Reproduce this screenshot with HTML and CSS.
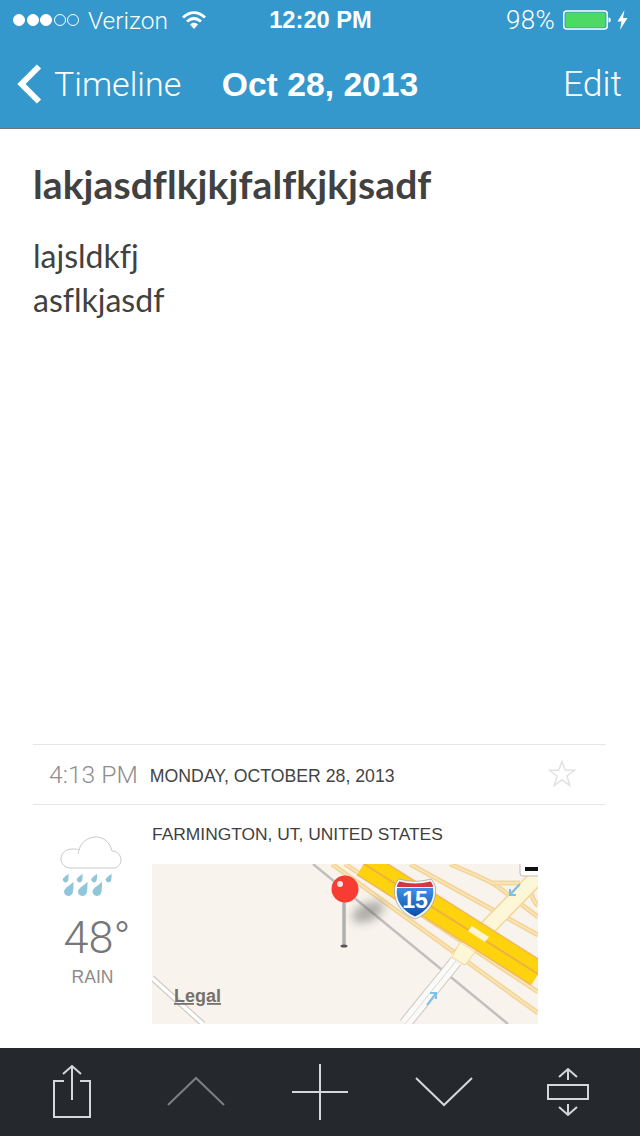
FILE: index.html
```html
<!DOCTYPE html>
<html lang="en">
<head>
<meta charset="utf-8">
<title>Oct 28, 2013</title>
<link rel="stylesheet" href="styles.css">
</head>
<body>
<div class="app">
  <header class="header">
    <div class="status">
      <div class="status-left">
        <div class="signal"><i class="dot on"></i><i class="dot on"></i><i class="dot on"></i><i class="dot"></i><i class="dot"></i></div>
        <span class="carrier">Verizon</span>
        <svg class="wifi" width="26" height="20" viewBox="0 0 26 20"><path class="wifi-arc" d="M2 7.500C9 1 17 1 24 7.500"/><path class="wifi-arc" d="M6 11.500C10.500 7.500 15.500 7.500 20 11.500"/><path class="wifi-fill" d="M9 14.500C11.500 12.300 14.500 12.300 17 14.500L13 19Z"/></svg>
      </div>
      <div class="time">12:20 PM</div>
      <div class="status-right">
        <span class="pct">98%</span>
        <svg class="battery" width="48" height="20" viewBox="0 0 48 20"><rect class="bat-shell" x="0.750" y="1" width="43.500" height="18" rx="3"/><rect class="bat-fill" x="2.500" y="2.500" width="40" height="15" rx="1.500"/><path class="bat-tip" d="M45.500 7.500C47 7.500 47.800 8.500 47.800 10C47.800 11.500 47 12.500 45.500 12.500Z"/></svg>
        <svg class="bolt" width="11" height="20" viewBox="0 0 11 20"><path class="bat-tip" d="M7.500 0L0.500 11.500H4.500L3 20L10.500 8H6Z"/></svg>
      </div>
    </div>
    <nav class="nav">
      <div class="nav-back">
        <svg class="chev" width="26" height="40" viewBox="0 0 26 40"><path class="chev-line" d="M23 2.500L5.500 20L23 37.500"/></svg>
        <span>Timeline</span>
      </div>
      <div class="nav-title">Oct 28, 2013</div>
      <div class="nav-edit">Edit</div>
    </nav>
  </header>

  <main class="note">
    <h1 class="note-title">lakjasdflkjkjfalfkjkjsadf</h1>
    <p class="note-text">lajsldkfj<br>asflkjasdf</p>
  </main>

  <section class="meta">
    <div class="meta-row">
      <span class="meta-time">4:13 PM</span>
      <span class="meta-date">MONDAY, OCTOBER 28, 2013</span>
      <svg class="star" width="30" height="30" viewBox="0 0 30 30"><path class="star-line" d="M15 1.500L18.300 10.300H27.500L20 16L22.700 25.500L15 19.800L7.300 25.500L10 16L2.500 10.300H11.700Z"/></svg>
    </div>
    <div class="detail">
      <div class="weather">
        <svg class="weather-icon" width="64" height="62" viewBox="0 0 64 62">
          <defs><path id="drop" d="M5 -9C3 -6 -4 -3 -4.500 1A4.500 4.500 0 0 0 4 3C5 0 5 -5 5 -9Z"/></defs>
          <path class="cloud" d="M11 32H53C58 32 61 28 61 24C61 19 57 15 52 15C50 6 43 1 36 1C28 1 21 6 19 14C17 13 15 13 12 13C6 13 1 17 1 23C1 28 5 32 11 32Z"/>
          <path class="cloud" d="M19 14C18.500 15 18.300 16 18.300 18"/>
          <g class="rain">
            <use href="#drop" transform="translate(5.500 43) scale(.62)"/>
            <use href="#drop" transform="translate(19.500 43) scale(.62)"/>
            <use href="#drop" transform="translate(34 43) scale(.62)"/>
            <use href="#drop" transform="translate(48.500 43) scale(.62)"/>
            <use href="#drop" transform="translate(8.500 54.500)"/>
            <use href="#drop" transform="translate(22.500 54.500)"/>
            <use href="#drop" transform="translate(37 54.500)"/>
          </g>
        </svg>
        <div class="temp">48°</div>
        <div class="cond">RAIN</div>
      </div>
      <div class="place">
        <div class="place-name">FARMINGTON, UT, UNITED STATES</div>
        <svg class="map" width="386" height="160" viewBox="0 0 386 160">
          <defs>
            <linearGradient id="shieldBlue" x1="0" y1="0" x2="0" y2="1"><stop offset="0" stop-color="#3f8fe6"/><stop offset="1" stop-color="#0e4fa8"/></linearGradient>
            <filter id="soft" x="-50%" y="-50%" width="200%" height="200%"><feGaussianBlur stdDeviation="5"/></filter>
            <linearGradient id="stem" x1="0" y1="0" x2="1" y2="0"><stop offset="0" stop-color="#8d8d8d"/><stop offset=".5" stop-color="#c4c4c4"/><stop offset="1" stop-color="#8a8a8a"/></linearGradient>
          </defs>
          <rect class="land" width="386" height="160"/>
          <path class="gray-road" d="M161 0L356 160"/>
          <path class="wl-edge" d="M0 114L51 160"/>
          <path class="wl-core" d="M0 114L51 160"/>

          <path class="side-edge" d="M180 0L386 149"/>
          <path class="side-core" d="M180 0L386 149"/>
          <path class="side-edge" d="M193 0L386 128"/>
          <path class="side-core" d="M193 0L386 128"/>
          <path class="side-edge" d="M258 0L386 71"/>
          <path class="side-core" d="M258 0L386 71"/>
          <path class="side-edge" d="M298 0C318 9 332 14 345 22L386 53"/>
          <path class="side-core" d="M298 0C318 9 332 14 345 22L386 53"/>
          <path class="side-edge" d="M341 19H368"/>
          <path class="side-core" d="M341 19H368"/>
          <path class="side-edge" d="M386 42C377 32 378 24 386 16"/>
          <path class="side-core" d="M386 42C377 32 378 24 386 16"/>

          <path class="ramp-edge" d="M386 12L305 95"/>
          <path class="ramp-core" d="M386 12L305 95"/>
          <path class="wh-edge" d="M304 97L253 160"/>
          <path class="wh-core" d="M304 97L253 160"/>
          <path class="wh-mid" d="M304 97L253 160"/>
          <path class="square-pad" d="M308 78L323 88L313 101L300 93Z"/>

          <path class="hw-edge" d="M212 0L386 110"/>
          <path class="hw" d="M212 0L386 110"/>
          <path class="hw-mid" d="M212 0L386 110"/>
          <path class="bridge" d="M320 62L337 73L333 78L316 67Z"/>
          <path class="arrow" d="M368 20L358 31M358 25V31H364"/>
          <path class="arrow" d="M275 141L284 129M278 129H284V135"/>

          <rect class="sign" x="368" y="-10" width="24" height="22" rx="3"/>
          <path class="sign-ink" d="M373 3H386V7H373Z"/>

          <ellipse class="pin-shadow" cx="216" cy="48" rx="17" ry="9" transform="rotate(-25 216 48)"/>
          <rect class="pin-stem" x="190.500" y="36" width="3" height="46" fill="url(#stem)"/>
          <ellipse class="pin-base" cx="192" cy="82" rx="3.500" ry="1.500"/>
          <circle class="pin-head" cx="193" cy="25" r="13.500"/>
          <circle class="pin-shine" cx="188" cy="20" r="3"/>

          <path class="shield-rim" d="M247 15C258 18 268 18 279 15C281 17 283 20 283.500 24C285 38 276 50 263 55C250 50 241 38 242.500 24C243 20 245 17 247 15Z"/>
          <path class="shield-blue" d="M245 24H281C283 37 275 47 263 52.500C251 47 243 37 245 24Z" fill="url(#shieldBlue)"/>
          <path class="shield-red" d="M247.500 17.500C258 20 268 20 278.500 17.500C280 19 281 21 281 23H245C245 21 246 19 247.500 17.500Z"/>
          <text class="shield-num" x="263" y="44">15</text>
          <text class="legal" x="22" y="138">Legal</text>
        </svg>
      </div>
    </div>
  </section>

  <footer class="toolbar">
    <div class="tool">
      <svg width="64" height="64" viewBox="0 0 64 64"><path class="tool-line" d="M24 21H14V57H50V21H40M32 40V6M23 14L32 6L41 14"/></svg>
    </div>
    <div class="tool">
      <svg width="64" height="64" viewBox="0 0 64 64"><path class="tool-line dim" d="M4 45L32 18L60 45"/></svg>
    </div>
    <div class="tool">
      <svg width="64" height="64" viewBox="0 0 64 64"><path class="tool-line" d="M4 32H60M32 4V60"/></svg>
    </div>
    <div class="tool">
      <svg width="64" height="64" viewBox="0 0 64 64"><path class="tool-line" d="M4 18L32 45L60 18"/></svg>
    </div>
    <div class="tool">
      <svg width="64" height="64" viewBox="0 0 64 64"><path class="tool-line" d="M12 25H52V39H12ZM32 20V9M23 17L32 9L41 17M32 44V55M23 47L32 55L41 47"/></svg>
    </div>
  </footer>
</div>
</body>
</html>
```
FILE: styles.css
```css
* { box-sizing: border-box; }
html, body { margin: 0; padding: 0; background: #fff; }
.app {
  width: 640px;
  height: 1136px;
  display: flex;
  flex-direction: column;
  overflow: hidden;
  font-family: "Liberation Sans", Arial, sans-serif;
}

/* header */
.header {
  height: 129px;
  background: #3498cc;
  border-bottom: 1px solid #6b7278;
  color: #fff;
  flex: none;
}
.status {
  height: 40px;
  padding: 0 12px 0 13px;
  display: grid;
  grid-template-columns: 1fr auto 1fr;
  align-items: center;
  font-size: 24px;
}
.status-left, .status-right { display: flex; align-items: center; }
.status-right { justify-content: flex-end; }
.signal { display: flex; gap: 1.500px; }
.dot {
  width: 12px;
  height: 12px;
  border-radius: 50%;
  border: 1px solid #fff;
  display: block;
}
.dot.on { background: #fff; }
.carrier { margin-left: 9px; font-family: Roboto, sans-serif; font-weight: 300; font-size: 24.500px; }
.wifi { margin-left: 13px; }
.wifi-arc { fill: none; stroke: #fff; stroke-width: 3; }
.wifi-fill, .bat-tip { fill: #fff; }
.time { font-weight: 700; font-size: 23.700px; }
.pct { font-family: Roboto, sans-serif; font-weight: 300; font-size: 26px; letter-spacing: .3px; margin-right: 8px; }
.bat-shell { fill: none; stroke: #fff; stroke-width: 1.500; }
.bat-fill { fill: #4cd964; }
.bolt { margin-left: 6px; }

.nav {
  height: 88px;
  padding: 0 18px 0 16px;
  display: grid;
  grid-template-columns: 1fr auto 1fr;
  align-items: center;
  font-family: Roboto, sans-serif;
  font-weight: 300;
  font-size: 34px;
}
.nav-back { display: flex; align-items: center; gap: 12px; }
.chev-line { fill: none; stroke: #fff; stroke-width: 6; }
.nav-title { font-family: "Liberation Sans", sans-serif; font-weight: 700; font-size: 33.700px; padding-left: 2px; }
.nav-edit { text-align: right; font-size: 35.500px; }

/* note */
.note { flex: 1; padding: 33px 33px 0; color: #414141; font-family: Lato, sans-serif; font-variant-ligatures: none; }
.note-title { margin: 0; font-size: 39px; line-height: 44px; font-weight: 700; letter-spacing: .08px; }
.note-text { margin: 28px 0 0; font-size: 32px; line-height: 44px; font-weight: 400; }

/* meta */
.meta { margin: 0 34px 0 33px; height: 304px; flex: none; }
.meta-row {
  height: 61px;
  display: flex;
  align-items: center;
  border-top: 1px solid #e6e6e6;
  border-bottom: 1px solid #e6e6e6;
  padding: 0 29px 0 16px;
}
.meta-time { font-family: Roboto, sans-serif; font-weight: 300; font-size: 24.700px; color: #8d8d8d; }
.meta-date { margin-left: 12px; font-size: 17.700px; color: #444; flex: 1; padding-top: 3px; }
.star-line { fill: none; stroke: #e2e2e2; stroke-width: 1.500; }

.detail { display: flex; }
.weather { width: 119px; display: flex; flex-direction: column; align-items: center; }
.weather-icon { margin: 31px 0 0 -2px; }
.cloud { fill: #fff; stroke: #c9c9c9; stroke-width: 1; }
.rain { fill: #8fc6da; }
.temp { font-family: Roboto, sans-serif; font-weight: 300; font-size: 45px; line-height: 52px; color: #777; margin-top: 14px; margin-left: 9px; }
.cond { font-size: 17.500px; line-height: 24px; color: #8c8c8c; margin-top: 1px; }
.place { flex: none; }
.place-name { font-size: 17.400px; line-height: 22px; color: #3f3f3f; margin-top: 18px; }
.map { display: block; margin-top: 19px; }

/* map */
.land { fill: #f8f4ed; }
.gray-road { fill: none; stroke: #c2c0bb; stroke-width: 2.500; }
.wl-edge { fill: none; stroke: #cfccc5; stroke-width: 6; }
.wl-core { fill: none; stroke: #fff; stroke-width: 3.500; }
.side-edge { fill: none; stroke: #f5d69a; stroke-width: 5; }
.side-core { fill: none; stroke: #fbf0d4; stroke-width: 1; }
.ramp-edge { fill: none; stroke: #f5d69a; stroke-width: 17; }
.ramp-core { fill: none; stroke: #fdf7d8; stroke-width: 14; }
.wh-edge { fill: none; stroke: #c9c7c1; stroke-width: 13; }
.wh-core { fill: none; stroke: #fbfaf8; stroke-width: 11; }
.wh-mid { fill: none; stroke: #d9d7d2; stroke-width: 1; }
.square-pad { fill: #fdf7d8; stroke: #f5d69a; stroke-width: 1; }
.hw-edge { fill: none; stroke: #f0b95a; stroke-width: 27; }
.hw { fill: none; stroke: #fcd30c; stroke-width: 24; }
.hw-mid { fill: none; stroke: #eeb23f; stroke-width: 2; }
.bridge { fill: #fdf6cf; }
.arrow { fill: none; stroke: #7cc0ea; stroke-width: 2; }
.sign { fill: #fff; stroke: #bdbdbd; stroke-width: 1; }
.sign-ink { fill: #111; }
.pin-shadow { fill: #555; opacity: .45; filter: url(#soft); }
.pin-base { fill: #555; }
.pin-head { fill: #f63c33; }
.pin-shine { fill: #ffe4e0; }
.shield-rim { fill: #f4f6f8; stroke: #9a9fa6; stroke-width: .750; }
.shield-red { fill: #d8363f; }
.shield-num { fill: #fff; font-family: "Liberation Sans", sans-serif; font-weight: 700; font-size: 23px; text-anchor: middle; }
.legal { fill: #75716c; font-family: "Liberation Sans", sans-serif; font-weight: 700; font-size: 18px; text-decoration: underline; }

/* toolbar */
.toolbar {
  height: 88px;
  flex: none;
  background: #25292e;
  padding: 0 10px;
  display: grid;
  grid-template-columns: repeat(5, 124px);
  align-items: center;
  justify-items: center;
}
.tool svg { display: block; }
.tool-line { fill: none; stroke: #d6d7d8; stroke-width: 2; }
.tool-line.dim { stroke: #7c7f82; }
```
